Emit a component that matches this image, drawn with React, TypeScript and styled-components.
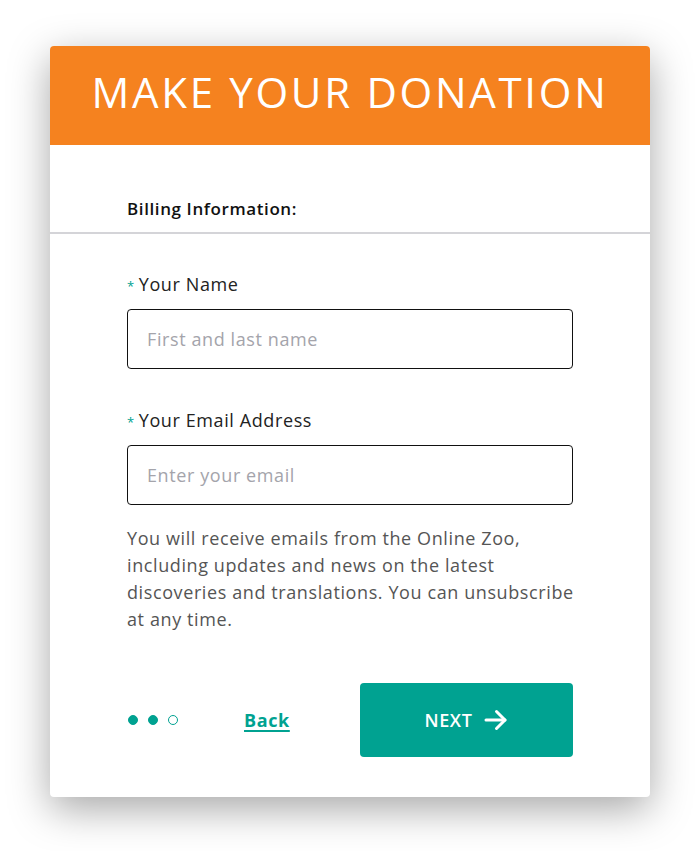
import React from "react";
import styled, { createGlobalStyle } from "styled-components";

const Global = createGlobalStyle`
  html, body { margin: 0; padding: 0; background: #ffffff; }
  body { font-family: "Open Sans", "Noto Sans", sans-serif; letter-spacing: 0.6px; }
  * { box-sizing: border-box; }
`;

const Page = styled.div`
  padding: 46px 50px 54px 50px;
`;

const Card = styled.div`
  width: 600px;
  background: #ffffff;
  border-radius: 4px;
  overflow: hidden;
  box-shadow: 0 12px 40px rgba(0, 0, 0, 0.35);
`;

const Header = styled.div`
  height: 99px;
  padding-bottom: 8px;
  background: #f5821f;
  display: flex;
  align-items: center;
  justify-content: center;
`;

const Title = styled.h1`
  margin: 0;
  color: #ffffff;
  font-size: 42px;
  font-weight: 400;
  letter-spacing: 2.7px;
  line-height: 1;
`;

const Section = styled.div`
  padding: 54px 77px 13px 77px;
  border-bottom: 2px solid #d4d4d8;
`;

const SectionTitle = styled.h2`
  margin: 0;
  font-size: 17px;
  font-weight: 600;
  color: #111;
  line-height: 20px;
`;

const Form = styled.div`
  padding: 39px 77px 40px 77px;
  display: flex;
  flex-direction: column;
`;

const Field = styled.div`
  display: flex;
  flex-direction: column;
  margin-bottom: 40px;
`;

const Label = styled.label`
  font-size: 18px;
  color: #222;
  line-height: 22px;
  margin-bottom: 12px;
  display: flex;
  align-items: baseline;
  gap: 4px;
`;

const Star = styled.span`
  color: #00a291;
  font-size: 13px;
`;

const Input = styled.input`
  height: 60px;
  border: 1px solid #111;
  border-radius: 4px;
  padding: 0 19px;
  font-family: inherit;
  font-size: 18px;
  letter-spacing: 0.6px;
  color: #222;
  outline: none;
  &::placeholder { color: #a4a4ab; }
`;

const Note = styled.p`
  margin: -20px 0 0 0;
  font-size: 18px;
  line-height: 27px;
  color: #555;
  white-space: nowrap;
`;

const Footer = styled.div`
  margin-top: 50px;
  display: flex;
  align-items: center;
`;

const Dots = styled.div`
  display: flex;
  gap: 10px;
  padding-left: 1px;
  width: 117px;
`;

const Dot = styled.span<{ $filled: boolean }>`
  width: 10px;
  height: 10px;
  border-radius: 50%;
  border: 1.5px solid #00a291;
  background: ${(p) => (p.$filled ? "#00a291" : "transparent")};
`;

const BackLink = styled.a`
  font-size: 18px;
  font-weight: 700;
  color: #00a291;
  text-decoration: underline;
  text-decoration-thickness: 2px;
  text-underline-offset: 3px;
  width: 116px;
`;

const NextButton = styled.button`
  margin-left: auto;
  width: 213px;
  height: 74px;
  border: none;
  border-radius: 4px;
  background: #00a291;
  color: #ffffff;
  font-family: inherit;
  font-size: 18px;
  font-weight: 600;
  letter-spacing: 0.6px;
  display: flex;
  align-items: center;
  justify-content: center;
  gap: 12px;
`;

const Arrow = () => (
  <svg width="24" height="24" viewBox="0 0 24 24" fill="none" stroke="currentColor"
    strokeWidth="3" strokeLinecap="round" strokeLinejoin="round">
    <path d="M2 12h19" />
    <path d="M12.5 3.5 21 12l-8.5 8.5" />
  </svg>
);

export default function App() {
  return (
    <>
      <Global />
      <Page>
        <Card>
          <Header>
            <Title>MAKE YOUR DONATION</Title>
          </Header>
          <Section>
            <SectionTitle>Billing Information:</SectionTitle>
          </Section>
          <Form>
            <Field>
              <Label>
                <Star>*</Star>Your Name
              </Label>
              <Input placeholder="First and last name" />
            </Field>
            <Field>
              <Label>
                <Star>*</Star>Your Email Address
              </Label>
              <Input placeholder="Enter your email" />
            </Field>
            <Note>
              You will receive emails from the Online Zoo,
              <br />
              including updates and news on the latest
              <br />
              discoveries and translations. You can unsubscribe
              <br />
              at any time.
            </Note>
            <Footer>
              <Dots>
                <Dot $filled />
                <Dot $filled />
                <Dot $filled={false} />
              </Dots>
              <BackLink href="#">Back</BackLink>
              <NextButton>
                NEXT
                <Arrow />
              </NextButton>
            </Footer>
          </Form>
        </Card>
      </Page>
    </>
  );
}
